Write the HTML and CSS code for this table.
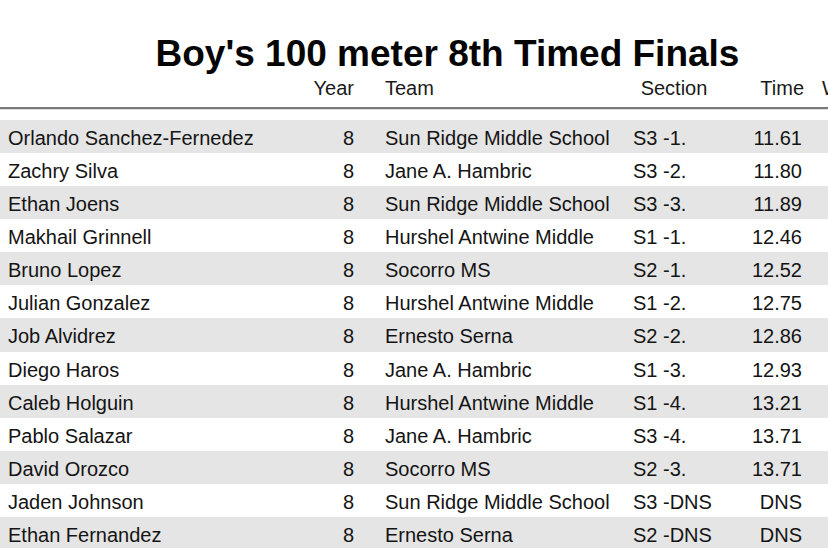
FILE: index.html
```html
<!DOCTYPE html>
<html>
<head>
<meta charset="utf-8">
<link rel="stylesheet" href="styles.css">
</head>
<body>
<div class="page">
  <h1 class="title">Boy's 100 meter 8th Timed Finals</h1>
  <div class="row head">
    <div class="c name"></div>
    <div class="c year">Year</div>
    <div class="c team">Team</div>
    <div class="c sect sect-h">Section</div>
    <div class="c time time-h">Time</div>
    <div class="c wind">Wind</div>
  </div>
  <div class="rule"></div>
  <div class="rows">
    <div class="row"><div class="c name">Orlando Sanchez-Fernedez</div><div class="c year">8</div><div class="c team">Sun Ridge Middle School</div><div class="c sect">S3 -1.</div><div class="c time">11.61</div><div class="c wind"></div></div>
    <div class="row"><div class="c name">Zachry Silva</div><div class="c year">8</div><div class="c team">Jane A. Hambric</div><div class="c sect">S3 -2.</div><div class="c time">11.80</div><div class="c wind"></div></div>
    <div class="row"><div class="c name">Ethan Joens</div><div class="c year">8</div><div class="c team">Sun Ridge Middle School</div><div class="c sect">S3 -3.</div><div class="c time">11.89</div><div class="c wind"></div></div>
    <div class="row"><div class="c name">Makhail Grinnell</div><div class="c year">8</div><div class="c team">Hurshel Antwine Middle</div><div class="c sect">S1 -1.</div><div class="c time">12.46</div><div class="c wind"></div></div>
    <div class="row"><div class="c name">Bruno Lopez</div><div class="c year">8</div><div class="c team">Socorro MS</div><div class="c sect">S2 -1.</div><div class="c time">12.52</div><div class="c wind"></div></div>
    <div class="row"><div class="c name">Julian Gonzalez</div><div class="c year">8</div><div class="c team">Hurshel Antwine Middle</div><div class="c sect">S1 -2.</div><div class="c time">12.75</div><div class="c wind"></div></div>
    <div class="row"><div class="c name">Job Alvidrez</div><div class="c year">8</div><div class="c team">Ernesto Serna</div><div class="c sect">S2 -2.</div><div class="c time">12.86</div><div class="c wind"></div></div>
    <div class="row"><div class="c name">Diego Haros</div><div class="c year">8</div><div class="c team">Jane A. Hambric</div><div class="c sect">S1 -3.</div><div class="c time">12.93</div><div class="c wind"></div></div>
    <div class="row"><div class="c name">Caleb Holguin</div><div class="c year">8</div><div class="c team">Hurshel Antwine Middle</div><div class="c sect">S1 -4.</div><div class="c time">13.21</div><div class="c wind"></div></div>
    <div class="row"><div class="c name">Pablo Salazar</div><div class="c year">8</div><div class="c team">Jane A. Hambric</div><div class="c sect">S3 -4.</div><div class="c time">13.71</div><div class="c wind"></div></div>
    <div class="row"><div class="c name">David Orozco</div><div class="c year">8</div><div class="c team">Socorro MS</div><div class="c sect">S2 -3.</div><div class="c time">13.71</div><div class="c wind"></div></div>
    <div class="row"><div class="c name">Jaden Johnson</div><div class="c year">8</div><div class="c team">Sun Ridge Middle School</div><div class="c sect">S3 -DNS</div><div class="c time">DNS</div><div class="c wind"></div></div>
    <div class="row"><div class="c name">Ethan Fernandez</div><div class="c year">8</div><div class="c team">Ernesto Serna</div><div class="c sect">S2 -DNS</div><div class="c time">DNS</div><div class="c wind"></div></div>
  </div>
</div>
</body>
</html>
```

FILE: styles.css
```css
html, body {
  margin: 0;
  padding: 0;
  overflow: hidden;
  background: #ffffff;
}
body {
  font-family: "Liberation Sans", Arial, Helvetica, sans-serif;
  color: #141414;
}
.page {
  width: 895px;
  padding-top: 34px;
}
.title {
  margin: 0;
  font-size: 37px;
  line-height: 40px;
  font-weight: bold;
  text-align: center;
  color: #050505;
}
.row {
  display: grid;
  grid-template-columns: 300px 57px 271px 92px 88px 87px;
  font-size: 20px;
  white-space: nowrap;
}
.head {
  margin-top: 2px;
  line-height: 24px;
  padding-bottom: 7px;
  color: #1a1a1a;
}
.rule {
  height: 2px;
  background: #7a7a7a;
  border-bottom: 1px solid #dcdcdc;
}
.rows {
  margin-top: 10px;
}
.rows .row {
  box-sizing: border-box;
  height: 33.08px;
  padding-top: 3px;
  line-height: 30px;
}
.rows .row:nth-child(odd) {
  background: #e5e5e5;
}
.c {
  overflow: hidden;
}
.name {
  padding-left: 8px;
}
.year {
  text-align: right;
  padding-right: 3px;
}
.team {
  padding-left: 28px;
}
.sect {
  padding-left: 5px;
}
.sect-h {
  padding-left: 0;
  text-align: center;
}
.time {
  text-align: right;
  padding-right: 6px;
}
.time-h {
  padding-right: 4px;
}
.wind {
  padding-left: 14px;
}
```
